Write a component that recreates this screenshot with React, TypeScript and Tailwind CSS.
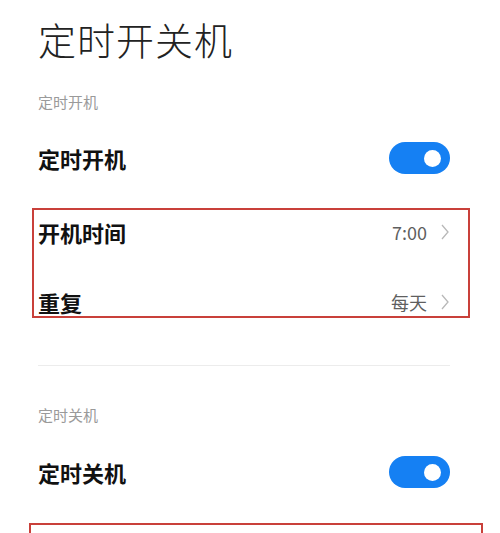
import React from "react"

const font = { fontFamily: '"Noto Sans CJK SC", "Noto Sans", sans-serif' }

function Chevron() {
  return (
    <svg width="10" height="16" viewBox="0 0 10 16" className="ml-[13px]">
      <polyline points="2,1 8,8 2,15" fill="none" stroke="#b8b8b8" strokeWidth="1.3" />
    </svg>
  )
}

function Toggle() {
  return (
    <div className="w-[61px] h-[32px] rounded-full bg-[#1580f3] flex items-center justify-end pr-[9px]">
      <div className="w-[17px] h-[17px] rounded-full bg-white" />
    </div>
  )
}

function SwitchRow({ label }: { label: string }) {
  return (
    <div className="h-[52px] flex items-center justify-between">
      <span className="text-[22px] font-bold text-[#111]">{label}</span>
      <Toggle />
    </div>
  )
}

function ValueRow({ label, value, className }: { label: string; value: string; className: string }) {
  return (
    <div className={`flex items-center justify-between pl-[4px] pr-[18px] ${className}`}>
      <span className="text-[22px] font-bold text-[#111]">{label}</span>
      <span className="flex items-center text-[18px] text-[#5f5f5f]">
        {value}
        <Chevron />
      </span>
    </div>
  )
}

export default function App() {
  return (
    <div className="w-[500px] h-[533px] overflow-hidden bg-white" style={font}>
      <div className="pl-[38px] pr-[50px]">
        <h1 className="mt-[19px] text-[38px] leading-[40px] font-light text-[#222] tracking-[1px]">定时开关机</h1>

        <div className="mt-[33px] text-[15px] leading-[20px] text-[#9a9a9a]">定时开机</div>
        <div className="mt-[20px]">
          <SwitchRow label="定时开机" />
        </div>

        <div className="mt-[24px] -ml-[6px] -mr-[20px] border-2 border-[#c9403a] h-[110px] flex flex-col">
          <ValueRow label="开机时间" value="7:00" className="h-[44px]" />
          <ValueRow label="重复" value="每天" className="h-[28px] mt-[34px]" />
        </div>

        <div className="mt-[47px] h-px bg-[#ececec]" />

        <div className="mt-[39px] text-[15px] leading-[20px] text-[#9a9a9a]">定时关机</div>
        <div className="mt-[21px]">
          <SwitchRow label="定时关机" />
        </div>

        <div className="mt-[25px] -ml-[9px] -mr-[33px] border-2 border-[#c9403a] h-[60px] pl-[7px] pt-[2px]">
          <span className="text-[22px] font-bold text-[#111]">关机时间</span>
        </div>
      </div>
    </div>
  )
}
